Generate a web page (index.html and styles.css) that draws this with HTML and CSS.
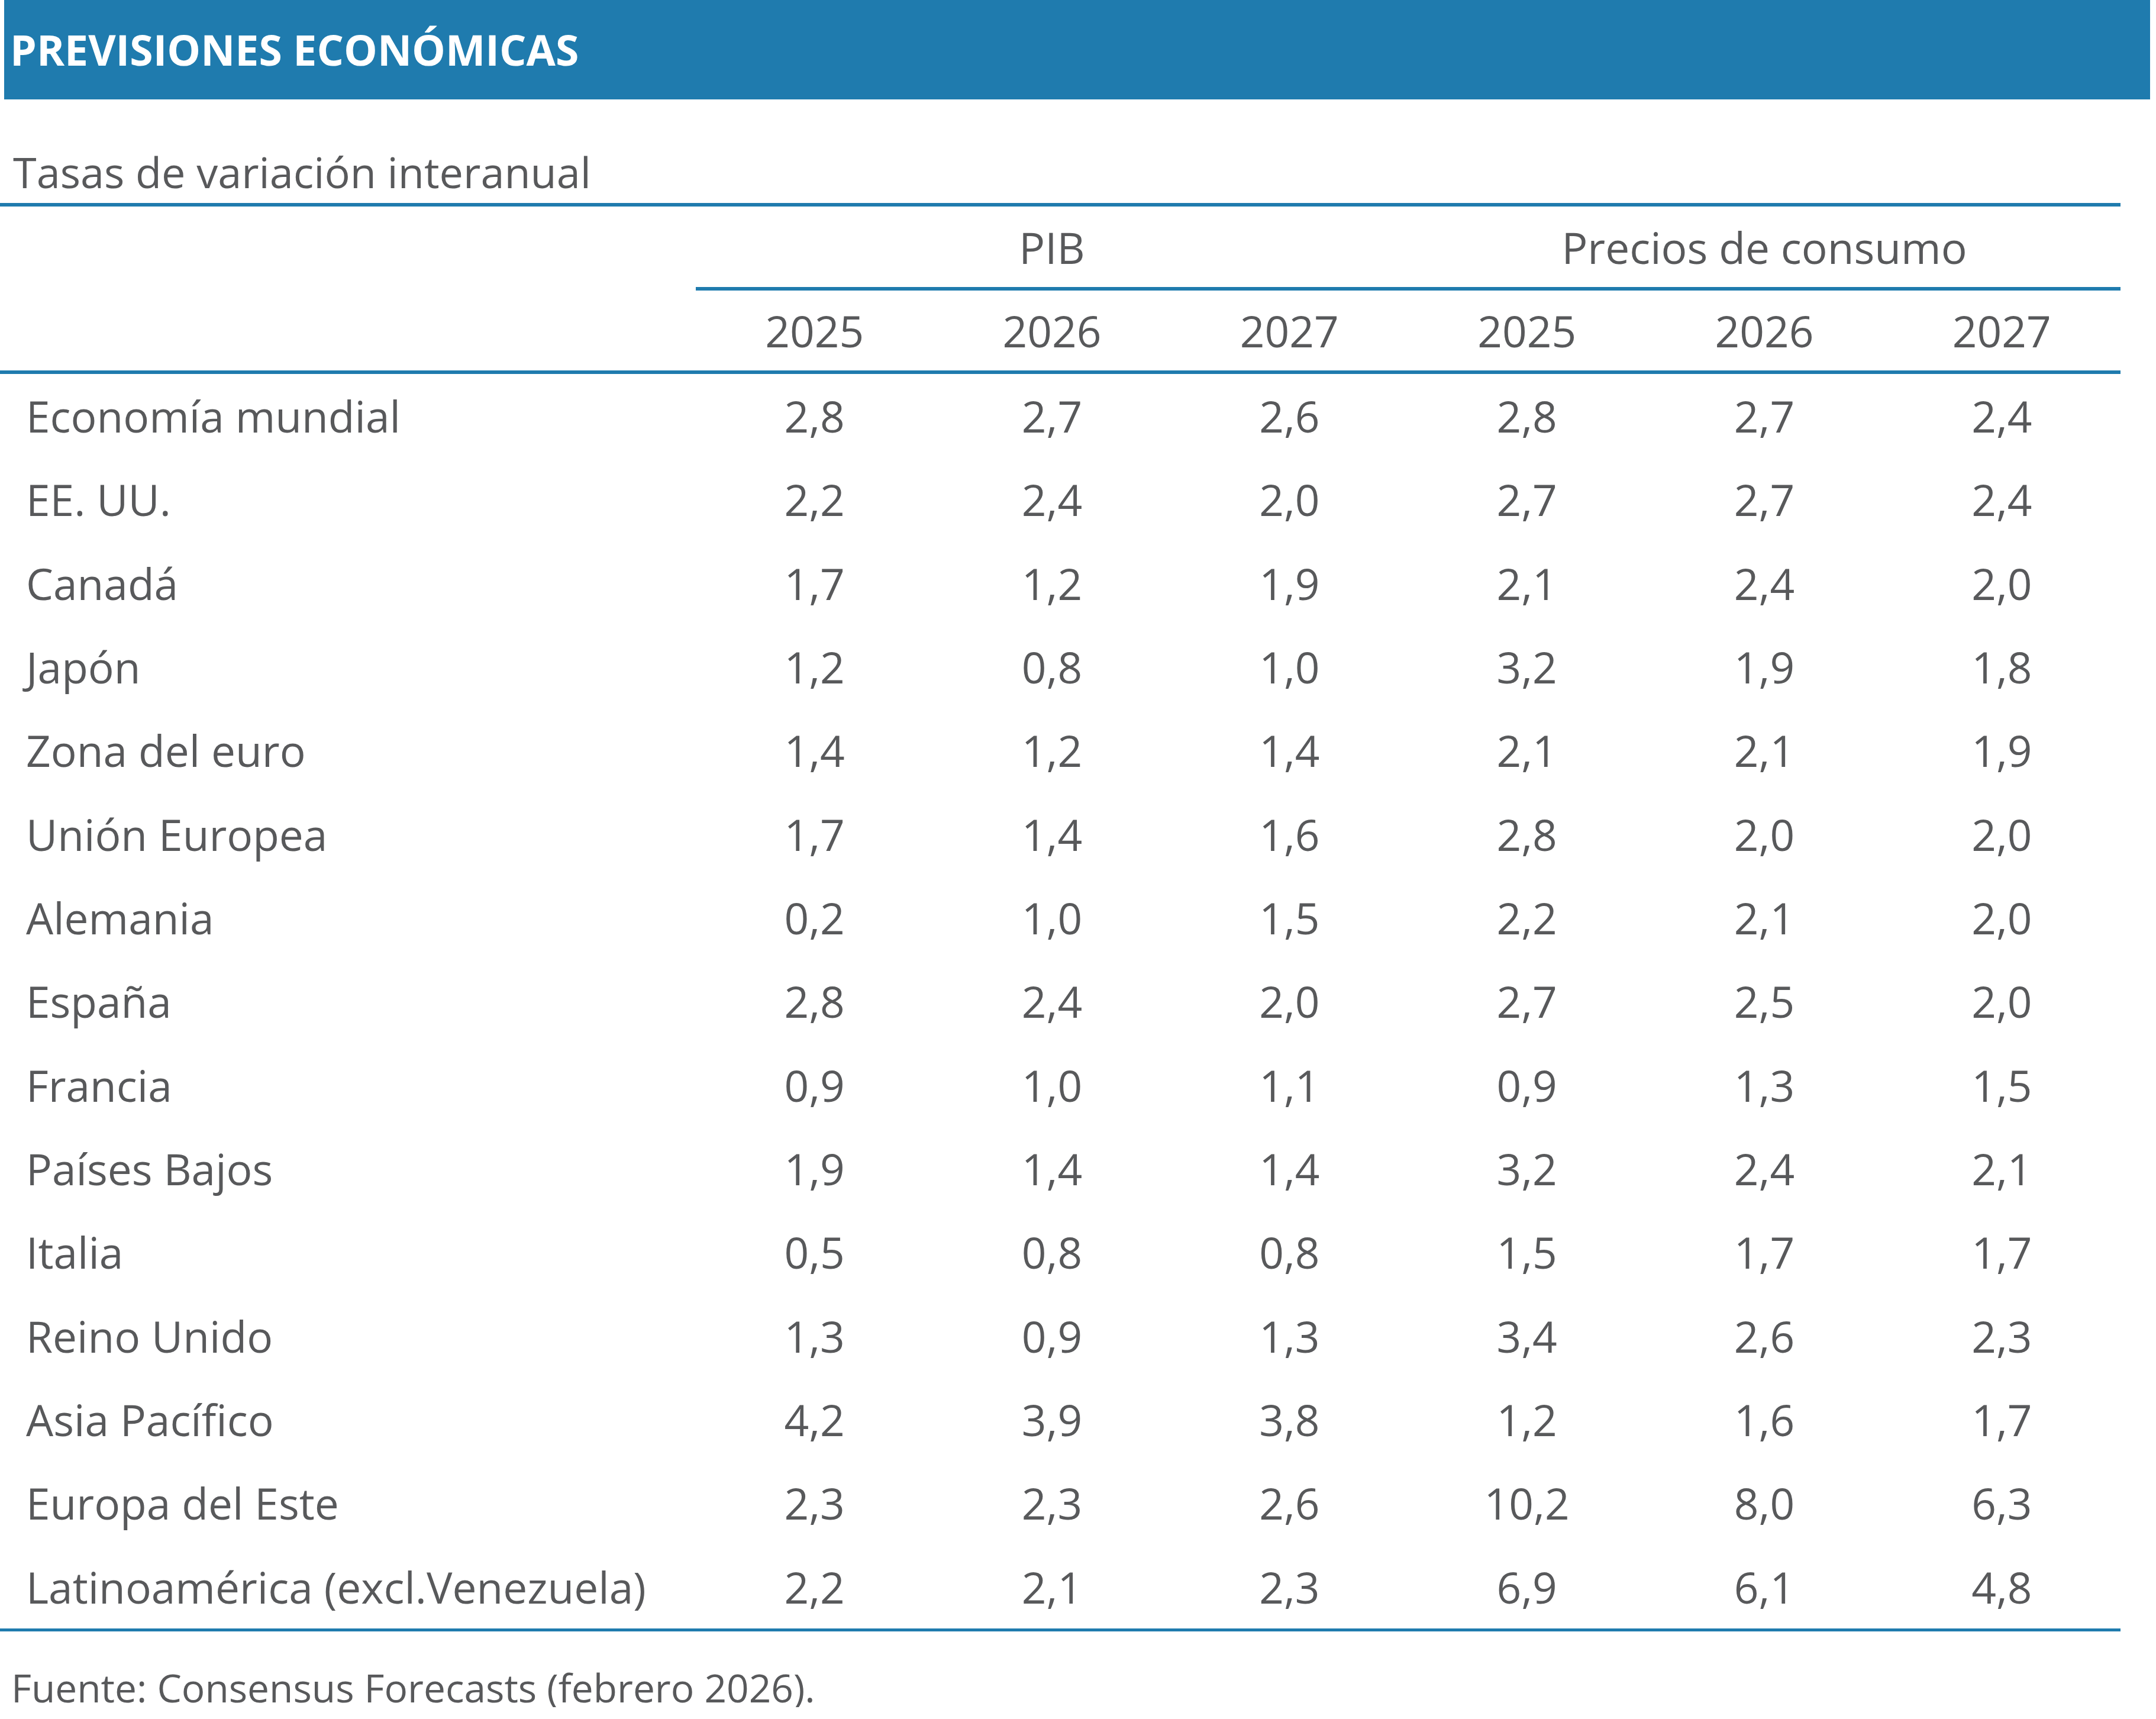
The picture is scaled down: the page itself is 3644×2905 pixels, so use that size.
FILE: index.html
```html
<!DOCTYPE html>
<html lang="es">
<head>
<meta charset="utf-8">
<title>Previsiones económicas</title>
<link rel="stylesheet" href="styles.css">
</head>
<body>
<header class="banner"><h1 class="banner-title">PREVISIONES ECONÓMICAS</h1></header>
<p class="subtitle">Tasas de variación interanual</p>
<div class="table">
  <div class="grp-row">
    <div class="cell"></div>
    <div class="cell grp">PIB</div>
    <div class="cell grp">Precios de consumo</div>
  </div>
  <div class="year-row">
    <div class="cell"></div>
    <div class="cell num">2025</div><div class="cell num">2026</div><div class="cell num">2027</div>
    <div class="cell num">2025</div><div class="cell num">2026</div><div class="cell num">2027</div>
  </div>
  <div class="body-row"><div class="cell label">Economía mundial</div><div class="cell num">2,8</div><div class="cell num">2,7</div><div class="cell num">2,6</div><div class="cell num">2,8</div><div class="cell num">2,7</div><div class="cell num">2,4</div></div>
  <div class="body-row"><div class="cell label">EE. UU.</div><div class="cell num">2,2</div><div class="cell num">2,4</div><div class="cell num">2,0</div><div class="cell num">2,7</div><div class="cell num">2,7</div><div class="cell num">2,4</div></div>
  <div class="body-row"><div class="cell label">Canadá</div><div class="cell num">1,7</div><div class="cell num">1,2</div><div class="cell num">1,9</div><div class="cell num">2,1</div><div class="cell num">2,4</div><div class="cell num">2,0</div></div>
  <div class="body-row"><div class="cell label">Japón</div><div class="cell num">1,2</div><div class="cell num">0,8</div><div class="cell num">1,0</div><div class="cell num">3,2</div><div class="cell num">1,9</div><div class="cell num">1,8</div></div>
  <div class="body-row"><div class="cell label">Zona del euro</div><div class="cell num">1,4</div><div class="cell num">1,2</div><div class="cell num">1,4</div><div class="cell num">2,1</div><div class="cell num">2,1</div><div class="cell num">1,9</div></div>
  <div class="body-row"><div class="cell label">Unión Europea</div><div class="cell num">1,7</div><div class="cell num">1,4</div><div class="cell num">1,6</div><div class="cell num">2,8</div><div class="cell num">2,0</div><div class="cell num">2,0</div></div>
  <div class="body-row"><div class="cell label">Alemania</div><div class="cell num">0,2</div><div class="cell num">1,0</div><div class="cell num">1,5</div><div class="cell num">2,2</div><div class="cell num">2,1</div><div class="cell num">2,0</div></div>
  <div class="body-row"><div class="cell label">España</div><div class="cell num">2,8</div><div class="cell num">2,4</div><div class="cell num">2,0</div><div class="cell num">2,7</div><div class="cell num">2,5</div><div class="cell num">2,0</div></div>
  <div class="body-row"><div class="cell label">Francia</div><div class="cell num">0,9</div><div class="cell num">1,0</div><div class="cell num">1,1</div><div class="cell num">0,9</div><div class="cell num">1,3</div><div class="cell num">1,5</div></div>
  <div class="body-row"><div class="cell label">Países Bajos</div><div class="cell num">1,9</div><div class="cell num">1,4</div><div class="cell num">1,4</div><div class="cell num">3,2</div><div class="cell num">2,4</div><div class="cell num">2,1</div></div>
  <div class="body-row"><div class="cell label">Italia</div><div class="cell num">0,5</div><div class="cell num">0,8</div><div class="cell num">0,8</div><div class="cell num">1,5</div><div class="cell num">1,7</div><div class="cell num">1,7</div></div>
  <div class="body-row"><div class="cell label">Reino Unido</div><div class="cell num">1,3</div><div class="cell num">0,9</div><div class="cell num">1,3</div><div class="cell num">3,4</div><div class="cell num">2,6</div><div class="cell num">2,3</div></div>
  <div class="body-row"><div class="cell label">Asia Pacífico</div><div class="cell num">4,2</div><div class="cell num">3,9</div><div class="cell num">3,8</div><div class="cell num">1,2</div><div class="cell num">1,6</div><div class="cell num">1,7</div></div>
  <div class="body-row"><div class="cell label">Europa del Este</div><div class="cell num">2,3</div><div class="cell num">2,3</div><div class="cell num">2,6</div><div class="cell num">10,2</div><div class="cell num">8,0</div><div class="cell num">6,3</div></div>
  <div class="body-row"><div class="cell label">Latinoamérica (excl.Venezuela)</div><div class="cell num">2,2</div><div class="cell num">2,1</div><div class="cell num">2,3</div><div class="cell num">6,9</div><div class="cell num">6,1</div><div class="cell num">4,8</div></div>
</div>
<p class="source">Fuente: Consensus Forecasts (febrero 2026).</p>
</body>
</html>
```
FILE: styles.css
```css
html, body {
  margin: 0;
  padding: 0;
  background: #ffffff;
}
body {
  font-family: "Open Sans", "Noto Sans", "Liberation Sans", sans-serif;
  color: #58595b;
}
.banner {
  margin: 0 10px 0 7px;
  height: 168px;
  background: #1f7bae;
}
.banner-title {
  margin: 0;
  padding-left: 10px;
  font-size: 71.5px;
  font-weight: 700;
  line-height: 168px;
  color: #ffffff;
}
.subtitle {
  margin: 0;
  padding: 86px 0 17px 22px;
  font-size: 72px;
  line-height: 72px;
}
.table {
  width: 3584px;
  border-top: 6px solid #1f7bae;
  border-bottom: 5px solid #1f7bae;
  font-size: 73px;
  line-height: 73px;
}
.grp-row {
  display: grid;
  grid-template-columns: 1176px 1fr 1fr;
  height: 142px;
}
.year-row {
  display: grid;
  grid-template-columns: 1176px repeat(6, 1fr);
  height: 141px;
  box-sizing: border-box;
  border-bottom: 6px solid #1f7bae;
}
.body-row {
  display: grid;
  grid-template-columns: 1176px repeat(6, 1fr);
  height: 141.333px;
}
.cell {
  display: flex;
  align-items: center;
  justify-content: center;
  white-space: nowrap;
}
.grp {
  box-sizing: border-box;
  border-bottom: 6px solid #1f7bae;
}
.label {
  justify-content: flex-start;
  padding-left: 44px;
}
.source {
  margin: 62px 0 0 0;
  padding-left: 19px;
  font-size: 65.8px;
  line-height: 65.8px;
}
```
